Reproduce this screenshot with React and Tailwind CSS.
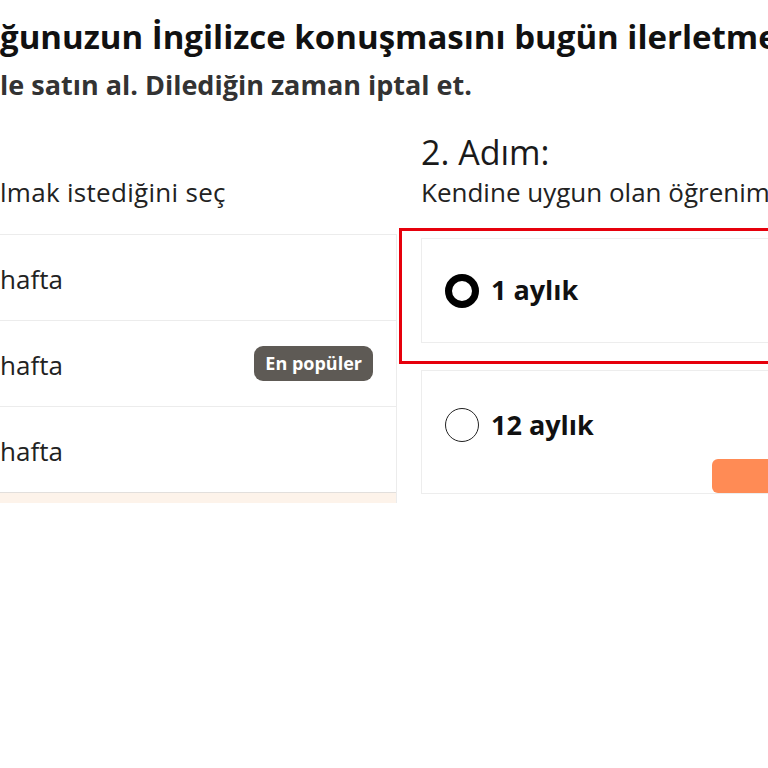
import React from "react";

export default function App() {
  return (
    <div
      className="w-[768px] h-[768px] overflow-hidden bg-white text-[#1a1a1a]"
      style={{ fontFamily: '"Open Sans", "Noto Sans", sans-serif' }}
    >
      <div className="pt-[14px] whitespace-nowrap">
        <h1 className="text-[33px] leading-[46px] font-bold text-[#111]">
          ğunuzun İngilizce konuşmasını bugün ilerletmeye başlayın
        </h1>
        <p className="mt-[8px] text-[27px] leading-[34px] font-bold text-[#333]">
          le satın al. Dilediğin zaman iptal et.
        </p>
      </div>

      <div className="flex mt-[30px] whitespace-nowrap">
        <div className="w-[397px] shrink-0">
          <div className="h-[40px]" />
          <div className="text-[26px] leading-[40px] text-[#222] tracking-[0.3px]">lmak istediğini seç</div>
          <div className="mt-[22px] border-t border-r border-[#ececec]">
            <div className="h-[86px] flex items-center pt-[3px] border-b border-[#ececec] text-[26px] text-[#222]">
              hafta
            </div>
            <div className="h-[86px] flex items-center justify-between pr-[23px] border-b border-[#ececec] text-[26px] text-[#222]">
              <span className="pt-[3px]">hafta</span>
              <span className="bg-[#5e5a55] text-white text-[18px] font-bold rounded-[9px] px-[11px] h-[35px] flex items-center">
                En popüler
              </span>
            </div>
            <div className="h-[86px] flex items-center pt-[3px] border-b border-[#e2dfdc] text-[26px] text-[#222]">
              hafta
            </div>
            <div className="h-[10px] bg-[#fdf3ea]" />
          </div>
        </div>

        <div className="ml-[24px] flex-1 min-w-0">
          <div className="text-[34px] leading-[40px] text-[#1a1a1a]">2. Adım:</div>
          <div className="text-[26px] leading-[40px] text-[#222]">
            Kendine uygun olan öğrenim planını seç
          </div>
          <div className="mt-[16px] -ml-[22px] w-[420px] border-[3px] border-[#e6000c] pl-[19px] pt-[7px] pb-[18px]">
            <div className="h-[105px] border border-[#ededed] flex items-center pl-[23px] gap-[12px]">
              <span className="w-[34px] h-[34px] rounded-full border-[7px] border-black bg-white shrink-0" />
              <span className="text-[27px] font-bold text-[#111]">1 aylık</span>
            </div>
          </div>
          <div className="mt-[6px] w-[400px] h-[124px] border border-[#ededed] pl-[23px] pt-[34px] relative">
            <div className="flex items-center gap-[12px]">
              <span className="w-[34px] h-[34px] rounded-full border border-[#222] bg-white shrink-0" />
              <span className="text-[27px] font-bold text-[#111]">12 aylık</span>
            </div>
            <div className="absolute left-[290px] top-[88px] w-[120px] h-[34px] rounded-[6px] bg-[#ff8b55]" />
          </div>
        </div>
      </div>
    </div>
  );
}
